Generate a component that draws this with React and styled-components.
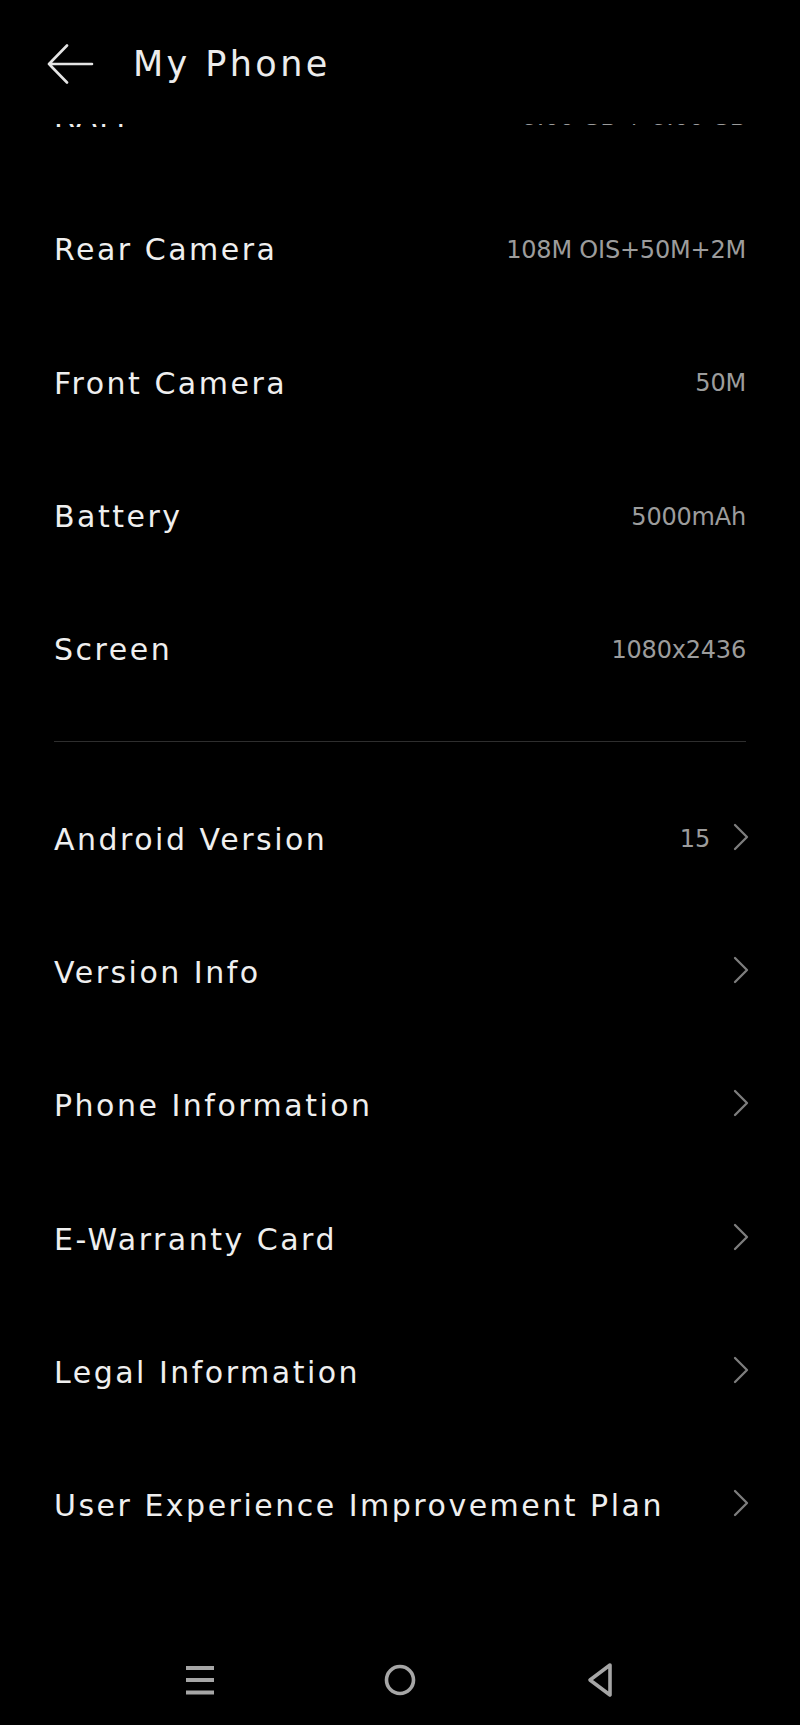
import React from "react";
import styled, { createGlobalStyle } from "styled-components";

const Global = createGlobalStyle`
  html, body { margin: 0; padding: 0; background: #000; }
  body { font-family: "DejaVu Sans", "Noto Sans", sans-serif; }
  * { box-sizing: border-box; }
`;

const Screen = styled.div`
  width: 800px;
  height: 1725px;
  background: #000;
  display: flex;
  flex-direction: column;
  overflow: hidden;
`;

const Header = styled.header`
  height: 124px;
  flex: none;
  padding: 4px 0 0 46px;
  display: flex;
  align-items: center;
  gap: 39px;
  background: #000;
  position: relative;
  z-index: 1;
`;

const BackButton = styled.svg`
  width: 48px;
  height: 40px;
  flex: none;
`;

const Title = styled.h1`
  margin: 0;
  font-size: 35px;
  font-weight: 400;
  letter-spacing: 3.4px;
  color: #ececec;
`;

const Viewport = styled.div`
  flex: 1;
  overflow: hidden;
`;

const List = styled.div`
  margin-top: -74px;
  display: flex;
  flex-direction: column;
`;

const Row = styled.div`
  height: 133.3px;
  flex: none;
  display: flex;
  align-items: center;
  padding: 0 54px;
`;

const Label = styled.span`
  flex: 1;
  font-size: 30px;
  letter-spacing: 2.5px;
  color: #efefef;
  white-space: nowrap;
`;

const Trail = styled.div`
  display: flex;
  align-items: center;
  gap: 23px;
`;

const Value = styled.span`
  font-size: 24px;
  letter-spacing: -0.2px;
  color: #9c9c9c;
  white-space: nowrap;
`;

const Chevron = styled.svg`
  width: 16px;
  height: 28px;
  margin-right: -3px;
  margin-top: -5px;
  flex: none;
`;

const Divider = styled.div`
  height: 1px;
  margin: 25px 54px 30px;
  background: #2e2e2e;
  flex: none;
`;

const NavBar = styled.nav`
  height: 90px;
  flex: none;
  display: flex;
  justify-content: center;
  align-items: center;
`;

const NavSlot = styled.div`
  width: 200px;
  display: flex;
  justify-content: center;
  align-items: center;
`;

const ChevronIcon = () => (
  <Chevron viewBox="0 0 16 28">
    <path d="M2 2 L14 14 L2 26" fill="none" stroke="#7d7d7d" strokeWidth="2.3" strokeLinecap="round" strokeLinejoin="round" />
  </Chevron>
);

const specs = [
  { label: "RAM", value: "8.00 GB + 8.00 GB" },
  { label: "Rear Camera", value: "108M OIS+50M+2M" },
  { label: "Front Camera", value: "50M" },
  { label: "Battery", value: "5000mAh" },
  { label: "Screen", value: "1080x2436" },
];

const links = [
  { label: "Android Version", value: "15" },
  { label: "Version Info" },
  { label: "Phone Information" },
  { label: "E-Warranty Card" },
  { label: "Legal Information" },
  { label: "User Experience Improvement Plan" },
];

export default function App() {
  return (
    <Screen>
      <Global />
      <Header>
        <BackButton viewBox="0 0 48 40">
          <path d="M46 20 H3 M21 1.5 L3 20 L21 38.5" fill="none" stroke="#e4e4e4" strokeWidth="2.6" strokeLinecap="round" strokeLinejoin="round" />
        </BackButton>
        <Title>My Phone</Title>
      </Header>
      <Viewport>
        <List>
          {specs.map((s) => (
            <Row key={s.label}>
              <Label>{s.label}</Label>
              <Value>{s.value}</Value>
            </Row>
          ))}
          <Divider />
          {links.map((l) => (
            <Row key={l.label}>
              <Label>{l.label}</Label>
              <Trail>
                {l.value && <Value>{l.value}</Value>}
                <ChevronIcon />
              </Trail>
            </Row>
          ))}
        </List>
      </Viewport>
      <NavBar>
        <NavSlot>
          <svg width="30" height="32" viewBox="0 0 30 32">
            <path d="M1 4 H29 M1 16 H29 M1 28.5 H29" stroke="#a6a6a6" strokeWidth="4" strokeLinecap="butt" />
          </svg>
        </NavSlot>
        <NavSlot>
          <svg width="32" height="32" viewBox="0 0 32 32">
            <circle cx="16" cy="16" r="13.5" fill="none" stroke="#a6a6a6" strokeWidth="3.6" />
          </svg>
        </NavSlot>
        <NavSlot>
          <svg width="28" height="36" viewBox="0 0 28 36">
            <path d="M24 3 L4 18 L24 33 Z" fill="none" stroke="#a6a6a6" strokeWidth="3.6" strokeLinejoin="round" />
          </svg>
        </NavSlot>
      </NavBar>
    </Screen>
  );
}
